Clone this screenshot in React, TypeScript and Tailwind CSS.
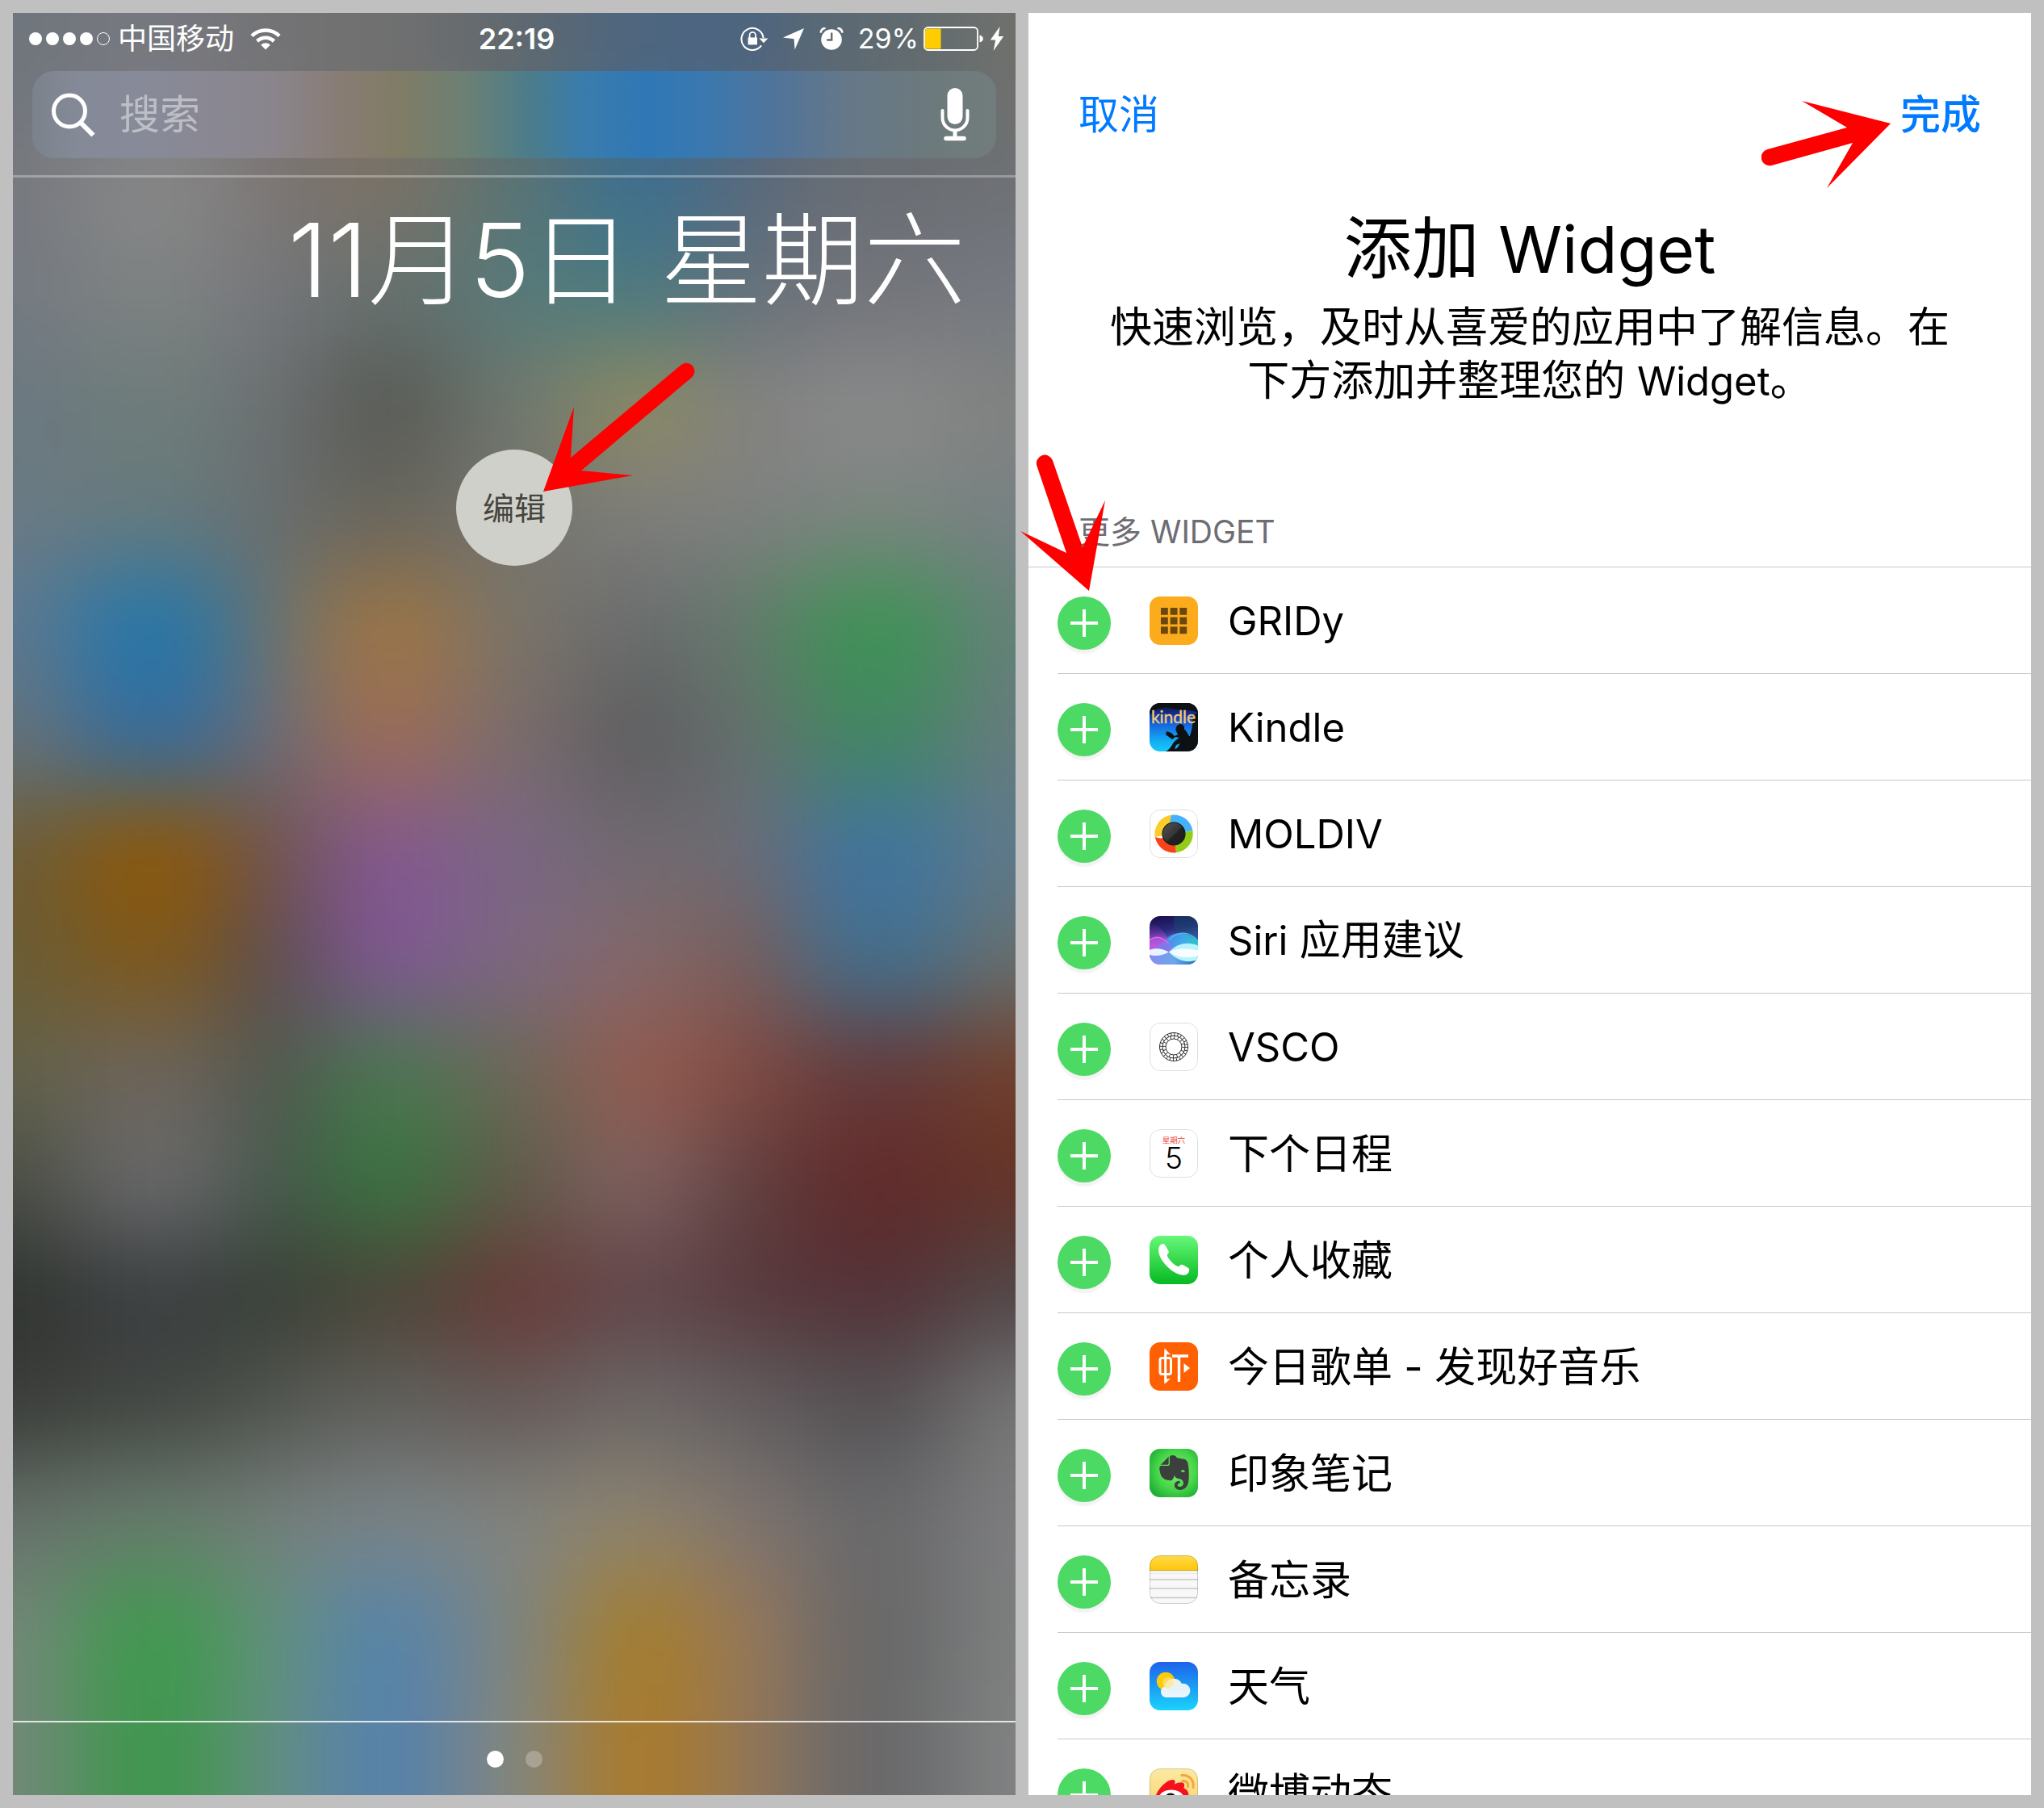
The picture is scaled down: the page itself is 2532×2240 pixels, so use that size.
import type { ReactNode } from "react";
import { FaEvernote } from "react-icons/fa";

// ─── Wallpaper ─────────────────────────────────────────────────────────────────

const COLS = [-160, 78, 266, 382, 548, 696, 848, 974, 1166, 1402];
const ROW_H = 138;

const WALL = [
  ["#6f767c", "#777880", "#737375", "#707070", "#60686e", "#4d6680", "#4c6480", "#5e6a70", "#70716c"],
  ["#76787e", "#888888", "#7c7472", "#7d7264", "#5a7472", "#386f94", "#58687c", "#6a6e74", "#6e7074"],
  ["#757a82", "#7e8282", "#76767c", "#66716f", "#557a7a", "#4a7a80", "#66707a", "#72747a", "#767a82"],
  ["#6a7880", "#6e7c7a", "#6c7072", "#575953", "#707870", "#8f8b5e", "#828280", "#8a8a8a", "#80827f"],
  ["#6b7a84", "#677a7c", "#686c6e", "#68665e", "#74746e", "#7e7e7c", "#7f8080", "#7c8480", "#788084"],
  ["#5c7890", "#2177ac", "#6c726e", "#a07642", "#7a7468", "#6a6c6e", "#637a6c", "#3a9452", "#66807a"],
  ["#66727a", "#366c9e", "#6e6c74", "#9c6c56", "#7a6c6c", "#5c5c5e", "#66706e", "#438662", "#687a7e"],
  ["#6b5c38", "#905806", "#6d5350", "#845890", "#7a6684", "#706a70", "#6c6c76", "#3e74a2", "#607a8a"],
  ["#6a5c34", "#7d581c", "#5a4c50", "#805694", "#7c6880", "#84686a", "#785c58", "#42708e", "#68706e"],
  ["#62624a", "#6c645c", "#4f554d", "#4a7850", "#6c6858", "#945a4e", "#824a42", "#643a3a", "#723f2a"],
  ["#4a4e46", "#6a6a6c", "#46564c", "#387440", "#5e5a4a", "#806262", "#5e4040", "#622a2a", "#643428"],
  ["#303430", "#3a3e40", "#363f36", "#4c4438", "#6a3836", "#60464a", "#58383c", "#523238", "#4e4648"],
  ["#3a3c38", "#434642", "#52564f", "#60605c", "#645a58", "#6c6868", "#625e60", "#545254", "#787878"],
  ["#66706a", "#6a7c70", "#767e7c", "#7c8486", "#82847f", "#8e8470", "#7e7470", "#6a6a6c", "#7e7e80"],
  ["#74887a", "#3e9a4d", "#66907c", "#5484ac", "#7e8480", "#a67e28", "#98785c", "#686868", "#7e8080"],
  ["#74887a", "#3e964d", "#688e82", "#5481ae", "#84867e", "#ac7a26", "#94785a", "#68686a", "#828484"],
];

function Wallpaper() {
  return (
    <svg className="absolute inset-0 h-full w-full" viewBox="0 0 1242 2208" preserveAspectRatio="none" aria-hidden="true">
      <defs>
        <filter id="wall-blur" filterUnits="userSpaceOnUse" x="-200" y="-200" width="1642" height="2608" colorInterpolationFilters="sRGB">
          <feGaussianBlur stdDeviation="60 58" />
        </filter>
      </defs>
      <g filter="url(#wall-blur)">
        {WALL.map((row, r) =>
          row.map((fill, c) => {
            const top = r === 0 ? -160 : r * ROW_H;
            const bottom = r === WALL.length - 1 ? 2368 : (r + 1) * ROW_H;
            return <rect key={`${r}-${c}`} x={COLS[c]} y={top} width={COLS[c + 1] - COLS[c] + 1} height={bottom - top + 1} fill={fill} />;
          }),
        )}
      </g>
    </svg>
  );
}

// ─── Status bar glyphs ─────────────────────────────────────────────────────────

function WifiGlyph() {
  return (
    <svg className="h-[28px] w-[38px]" viewBox="0 0 38 28" fill="none" stroke="#fff" strokeWidth="4.6">
      <path d="M2 10.5a24 24 0 0 1 34 0" />
      <path d="M8.6 17a14.8 14.8 0 0 1 20.8 0" />
      <path d="M19 27.5l-5.8-5.8a8.2 8.2 0 0 1 11.6 0z" fill="#fff" stroke="none" />
    </svg>
  );
}

function RotationLockGlyph() {
  return (
    <svg className="h-[30px] w-[36px]" viewBox="0 0 36 30" fill="none" stroke="#fff">
      <path d="M26.1 23.4A13.6 13.6 0 1 1 28.6 14" strokeWidth="2" />
      <path d="M23.4 14.4h11l-5.5 5.8z" fill="#fff" stroke="none" />
      <rect x="9.6" y="13.4" width="11.4" height="9" fill="#fff" stroke="none" />
      <path d="M11.6 14v-3.4a3.7 3.7 0 0 1 7.4 0V14" strokeWidth="1.8" />
    </svg>
  );
}

function LocationGlyph() {
  return (
    <svg className="h-[28px] w-[28px]" viewBox="0 0 28 28">
      <path d="M27 1L15.5 27.5 14.6 14.2 1 12.6z" fill="#fff" />
    </svg>
  );
}

function AlarmGlyph() {
  return (
    <svg className="h-[28px] w-[30px]" viewBox="0 0 30 28">
      <circle cx="15" cy="15" r="12.8" fill="#fff" />
      <path d="M1.6 6.6C2 3.4 4.2 1 7.6 .7M28.4 6.6C28 3.4 25.8 1 22.4 .7" stroke="#fff" strokeWidth="2.6" fill="none" />
      <path d="M15.2 6.5v9h-6" stroke="#666b6e" strokeWidth="2.4" fill="none" />
    </svg>
  );
}

function BatteryGlyph() {
  return (
    <svg className="h-[30px] w-[74px]" viewBox="0 0 74 30">
      <rect x="1" y="1" width="66" height="28" rx="4.5" fill="none" stroke="#fff" strokeWidth="1.8" />
      <path d="M5 2.5h16.5v25H5a3 3 0 0 1-3-3v-19a3 3 0 0 1 3-3z" fill="#ffcc00" />
      <path d="M69.5 10.5c3 .6 4.3 2.3 4.3 4.5s-1.3 3.9-4.3 4.5z" fill="#fff" />
    </svg>
  );
}

function BoltGlyph() {
  return (
    <svg className="h-[30px] w-[18px]" viewBox="0 0 18 30">
      <path d="M12.5 0L.8 16.5h6.4L4.6 30 17.2 12h-6.4z" fill="#fff" />
    </svg>
  );
}

function StatusBar() {
  return (
    <div className="grid h-[72px] grid-cols-[1fr_auto_1fr] items-center pb-2 pl-5 pr-[14px] text-[36px] leading-none">
      <div className="flex items-center">
        <div className="flex gap-[5px]">
          {[0, 1, 2, 3].map((i) => (
            <span key={i} className="size-4 rounded-full bg-white" />
          ))}
          <span className="size-4 rounded-full border border-white" />
        </div>
        <span className="ml-[10px]">中国移动</span>
        <span className="ml-5">
          <WifiGlyph />
        </span>
      </div>
      <span className="font-semibold">22:19</span>
      <div className="flex items-center justify-end">
        <RotationLockGlyph />
        <span className="ml-4">
          <LocationGlyph />
        </span>
        <span className="ml-[18px]">
          <AlarmGlyph />
        </span>
        <span className="ml-[18px] text-[34px]">29%</span>
        <span className="ml-[6px]">
          <BatteryGlyph />
        </span>
        <span className="ml-2">
          <BoltGlyph />
        </span>
      </div>
    </div>
  );
}

// ─── Annotation arrows ─────────────────────────────────────────────────────────

function EditArrow() {
  return (
    <svg className="pointer-events-none absolute bottom-[92px] left-[108px] z-10 h-[160px] w-[188px]" viewBox="0 0 188 160" fill="#ff0000">
      <path d="M0 160L38 55 34 118 170.5 3.2A10.2 10.2 0 0 1 184 18.6L47 134 111 140z" />
    </svg>
  );
}

function DoneArrow() {
  return (
    <svg className="pointer-events-none absolute right-full top-[19px] mr-3 h-[108px] w-[160px]" viewBox="0 0 160 108" fill="#ff0000">
      <path d="M160 28L50 0 106 33 7.5 60A10.2 10.2 0 0 0 12.5 80L113 52 81 108z" />
    </svg>
  );
}

function AddArrow() {
  return (
    <svg className="pointer-events-none absolute bottom-[-30px] left-[-10px] z-10 h-[169px] w-[105px]" viewBox="0 0 105 169" fill="#ff0000">
      <path d="M85 169L0 95 57 122 20.5 14.5A10.3 10.3 0 0 1 40 7.5L77 115 105 57z" />
    </svg>
  );
}

// ─── App icons ─────────────────────────────────────────────────────────────────

function Tile({ children, border = false }: { children: ReactNode; border?: boolean }) {
  return (
    <svg className="size-[60px] shrink-0 rounded-[13px]" viewBox="0 0 60 60" aria-hidden="true">
      {children}
      {border && <rect x="0.5" y="0.5" width="59" height="59" rx="12.5" fill="none" stroke="#dedede" />}
    </svg>
  );
}

const gridy = (
  <Tile>
    <rect width="60" height="60" fill="#fcab1c" />
    {[14, 25.7, 37.4].map((y) => [14, 25.7, 37.4].map((x) => <rect key={`${x}-${y}`} x={x} y={y} width="8.8" height="8.8" fill="#6b470c" />))}
  </Tile>
);

const kindle = (
  <Tile>
    <defs>
      <linearGradient id="kindle-sky" x1="0" y1="0" x2="0" y2="1">
        <stop offset="0" stopColor="#10131c" />
        <stop offset="0.2" stopColor="#122a8c" />
        <stop offset="0.45" stopColor="#1668e0" />
        <stop offset="0.8" stopColor="#12b0f4" />
        <stop offset="1" stopColor="#18c8fa" />
      </linearGradient>
    </defs>
    <rect width="60" height="60" fill="url(#kindle-sky)" />
    <path d="M0 0h60v60H20c4-2 7-6 9-10 3-4 6-6 8-7l-5-1c-1.5 1-3 2.5-4 3l-8-6 1-4 6 2 4 4 4-2c0-1-2.5-3-2.5-6 0-3 2-6.500 5.500-7 4 0 5.500 3 5 6.500 2.500 1.500 4.500 6 6.500 9 3-7 4-14 4-22 1-4 3-6 6-8L50 9 34 8 20 5 8 8 0 14z" fill="#0e1114" />
    <path d="M33 52l5-2-4 6-3 1z" fill="#18a8f0" />
    <text x="29.5" y="25" textAnchor="middle" fontSize="21" fontFamily="Lato, sans-serif" stroke="#f5c878" strokeWidth="0.4" fill="#f5c878">
      kindle
    </text>
  </Tile>
);

const moldiv = (
  <Tile border>
    <defs>
      <linearGradient id="moldiv-lens" x1="0" y1="0" x2="1" y2="1">
        <stop offset="0" stopColor="#555" />
        <stop offset="0.5" stopColor="#363636" />
        <stop offset="0.55" stopColor="#222" />
        <stop offset="1" stopColor="#1c1c1c" />
      </linearGradient>
    </defs>
    <rect width="60" height="60" fill="#fff" />
    <path d="M30 30L6.8 34A23.5 23.5 0 0 1 28 6.6z" fill="#fccb2c" />
    <path d="M30 30L28 6.6C24 12 25 20 30 30l23.4-4A23.5 23.5 0 0 0 28 6.6z" fill="#43b2fb" />
    <path d="M30 30l23.4-4A23.5 23.5 0 0 1 33 53.3z" fill="#93cc16" />
    <path d="M30 30l3 23.3A23.5 23.5 0 0 1 6.8 34c6 2.5 14 2 23.2-4z" fill="#f9421c" />
    <circle cx="30" cy="30" r="14" fill="url(#moldiv-lens)" stroke="#1a1a1a" strokeWidth="1.2" />
  </Tile>
);

const siri = (
  <Tile>
    <defs>
      <linearGradient id="siri-bg" x1="0" y1="0" x2="0.2" y2="1">
        <stop offset="0" stopColor="#160c48" />
        <stop offset="0.35" stopColor="#2c2a7c" />
        <stop offset="0.65" stopColor="#5a78d8" />
        <stop offset="1" stopColor="#6a7ce0" />
      </linearGradient>
      <linearGradient id="siri-right" x1="0" y1="0" x2="1" y2="0">
        <stop offset="0.3" stopColor="#4d8df0" />
        <stop offset="0.7" stopColor="#3fb4ec" />
        <stop offset="1" stopColor="#1fd4c0" />
      </linearGradient>
      <linearGradient id="siri-left" x1="0" y1="0" x2="0" y2="1">
        <stop offset="0" stopColor="#9a3cc8" stopOpacity="0" />
        <stop offset="1" stopColor="#d850e0" />
      </linearGradient>
      <linearGradient id="siri-floor" x1="0" y1="0" x2="1" y2="0">
        <stop offset="0" stopColor="#8a8cf0" />
        <stop offset="0.5" stopColor="#6aa8ec" />
        <stop offset="1" stopColor="#1c6cb4" />
      </linearGradient>
    </defs>
    <rect width="60" height="60" fill="url(#siri-bg)" />
    <path d="M0 8c10 2 18 10 24 22L0 44z" fill="url(#siri-left)" />
    <path d="M30 0h30v30c-8-8-18-12-30-9z" fill="#134a6c" opacity="0.5" />
    <path d="M0 44c12-2 20-22 36-23 10-.6 18 5 24 10v21c-10 4-22 6-36 4C14 54 8 48 0 46z" fill="url(#siri-right)" opacity="0.85" />
    <path d="M0 30c8-6 16-4 24 4 8 9 14 16 22 22l-26 4H0z" fill="#c060e8" opacity="0.45" />
    <path d="M0 47c10 3 18 0 24-2 10 10 24 14 36 8v7H0z" fill="url(#siri-floor)" />
    <path d="M0 30c8-7 16-4 24 4" fill="none" stroke="#f060e0" strokeWidth="1.4" />
    <path d="M24 30c8-10 24-14 36 1" fill="none" stroke="#58b4f8" strokeWidth="1.4" />
    <path d="M0 42c7-3 16-2 24 2.5-8 4.5-17 5.5-24 3.5z" fill="#e8f4ff" />
    <path d="M24 44.500c9-10 22-14 36-8V54c-14 5-26 1-36-9.500z" fill="#b8f4ff" />
    <path d="M24 44.500c10-5 22-5 36-2v7c-14 3-26 2-36-5z" fill="#fff" opacity="0.9" />
  </Tile>
);

const vsco = (
  <Tile border>
    <rect width="60" height="60" fill="#fff" />
    <g fill="none" stroke="#2c2c2c">
      <circle cx="30" cy="30" r="17.5" />
      <circle cx="30" cy="30" r="14" />
      <circle cx="30" cy="30" r="10" />
      <circle cx="30" cy="30" r="15.8" strokeWidth="3.5" strokeDasharray="0.9 3.236" />
      <circle cx="30" cy="30" r="12" strokeWidth="4" strokeDasharray="0.9 3.812" />
    </g>
  </Tile>
);

const calendar = (
  <Tile border>
    <rect width="60" height="60" fill="#fff" />
    <text x="30" y="17" textAnchor="middle" fontSize="9.5" fontFamily="'Noto Sans CJK SC', sans-serif" fill="#f0433a">
      星期六
    </text>
    <text x="30" y="49" textAnchor="middle" fontSize="37" fontWeight="300" fontFamily="Inter, sans-serif" fill="#000">
      5
    </text>
  </Tile>
);

const phone = (
  <Tile>
    <defs>
      <linearGradient id="phone-bg" x1="0" y1="0" x2="0" y2="1">
        <stop offset="0" stopColor="#67f879" />
        <stop offset="1" stopColor="#06b922" />
      </linearGradient>
    </defs>
    <rect width="60" height="60" fill="url(#phone-bg)" />
    <path d="M12.5 12.5c1.5-1.8 3.6-2.6 5-2.4 1.4.3 2.6 3 4 5.4 1.3 2.3 2.7 3.7 2.3 5.3-.3 1.3-2 1.9-2 3.2 0 2.2 3.5 6.4 6 8.9 2.5 2.4 6 5 8 5 1.5 0 1.8-1.8 3.4-2.2 1.8-.4 3.6 1 5.6 2.3 2 1.2 4.4 2.3 4.5 3.7.1 1.6-.7 4.2-2.7 5.9-2 1.5-6 1.7-10.3.2-5-1.8-11.5-6.3-15.8-11.1C15.8 31.8 12 25.5 11.3 20c-.4-3 0-5.9 1.2-7.5z" fill="#fff" />
  </Tile>
);

const xiami = (
  <Tile>
    <rect width="60" height="60" fill="#fe6002" />
    <g fill="none" stroke="#fff" strokeWidth="3">
      <rect x="13" y="19.5" width="13.5" height="20" rx="2.5" />
      <path d="M19.7 10v40" />
      <path d="M28 17h20M36.5 17v32" strokeWidth="3.4" />
    </g>
    <path d="M18.2 7l8 8.5-6.5-1zM18.2 52l8-7-6.5.8z" fill="#fff" />
    <path d="M42.5 26v12l7.5-6z" fill="#fff" />
  </Tile>
);

const evernote = (
  <Tile>
    <defs>
      <radialGradient id="ever-bg" cx="0.55" cy="0.45" r="0.65">
        <stop offset="0" stopColor="#7cf070" />
        <stop offset="0.6" stopColor="#48d64a" />
        <stop offset="1" stopColor="#1fae36" />
      </radialGradient>
    </defs>
    <rect width="60" height="60" fill="url(#ever-bg)" />
    <FaEvernote x="6" y="5" size={49} color="#3c403c" />
  </Tile>
);

const notes = (
  <Tile>
    <defs>
      <linearGradient id="notes-top" x1="0" y1="0" x2="0" y2="1">
        <stop offset="0" stopColor="#ffdc4e" />
        <stop offset="1" stopColor="#fdc507" />
      </linearGradient>
    </defs>
    <rect width="60" height="60" fill="#f8f8f8" />
    <rect width="60" height="19" fill="url(#notes-top)" />
    <path d="M0 18.7h60" stroke="#c9a23c" />
    <path d="M0 22.5h60" stroke="#dcdcdc" strokeDasharray="1 1" />
    <path d="M0 30h60M0 41h60M0 52.5h60" stroke="#c8c8c8" strokeWidth="1.3" />
    <rect x="0.5" y="0.5" width="59" height="59" rx="12.5" fill="none" stroke="#000" strokeOpacity="0.18" />
  </Tile>
);

const weather = (
  <Tile>
    <defs>
      <linearGradient id="weather-bg" x1="0" y1="0" x2="0" y2="1">
        <stop offset="0" stopColor="#1d62ea" />
        <stop offset="1" stopColor="#1bd3fd" />
      </linearGradient>
      <linearGradient id="weather-cloud" x1="0" y1="0" x2="0" y2="1">
        <stop offset="0" stopColor="#fdf6d4" />
        <stop offset="0.5" stopColor="#eef7fd" />
        <stop offset="1" stopColor="#f6fbff" />
      </linearGradient>
    </defs>
    <rect width="60" height="60" fill="url(#weather-bg)" />
    <circle cx="20" cy="24" r="11.2" fill="#fdcb08" />
    <path d="M20.5 44a7 7 0 0 1-2-13.5A11.5 11.5 0 0 1 40 27a8.6 8.6 0 1 1 2 17z" fill="url(#weather-cloud)" fillOpacity="0.95" />
    <circle cx="23" cy="26" r="7" fill="#fbe48a" opacity="0.6" />
  </Tile>
);

const weibo = (
  <Tile>
    <defs>
      <linearGradient id="weibo-bg" x1="0" y1="0" x2="0" y2="1">
        <stop offset="0" stopColor="#fbeaa4" />
        <stop offset="1" stopColor="#f8cf62" />
      </linearGradient>
    </defs>
    <rect width="60" height="60" fill="url(#weibo-bg)" />
    <path d="M8 33c3-8 13-19 21-19 3 0 3 3 2 5.5 5-2.5 11-3.5 12 0 .5 2-.5 4-.5 5 3 1 6 4 6 9 0 9-10 16-22 16S6 43 8 33z" fill="#f5121c" />
    <ellipse cx="27" cy="37" rx="15.5" ry="10.5" fill="#fff" />
    <circle cx="26" cy="38" r="7.5" fill="#111" />
    <g fill="none" stroke="#f9a33c" strokeWidth="3" strokeLinecap="round">
      <path d="M40 8.5c9-1 15.5 6 14 15" />
      <path d="M41 15.5c4.5-.5 7.5 3 6.5 7" />
    </g>
    <rect x="0.5" y="0.5" width="59" height="59" rx="12.5" fill="none" stroke="#000" strokeOpacity="0.15" />
  </Tile>
);

const WIDGETS: { name: string; latin?: string; icon: ReactNode }[] = [
  { latin: "GRIDy", name: "", icon: gridy },
  { latin: "Kindle", name: "", icon: kindle },
  { latin: "MOLDIV", name: "", icon: moldiv },
  { latin: "Siri", name: " 应用建议", icon: siri },
  { latin: "VSCO", name: "", icon: vsco },
  { name: "下个日程", icon: calendar },
  { name: "个人收藏", icon: phone },
  { name: "今日歌单 - 发现好音乐", icon: xiami },
  { name: "印象笔记", icon: evernote },
  { name: "备忘录", icon: notes },
  { name: "天气", icon: weather },
  { name: "微博动态", icon: weibo },
];

// ─── Panels ────────────────────────────────────────────────────────────────────

function TodayPanel() {
  return (
    <section className="relative flex flex-col overflow-hidden bg-[#6f7274] text-white">
      <Wallpaper />

      <header className="relative border-b-[3px] border-white/30 pb-[21px]">
        <StatusBar />
        <form
          role="search"
          className="mx-6 flex h-[108px] items-center rounded-[27px] bg-[linear-gradient(90deg,#7c828c_0%,#858a98_5%,#888a98_13%,#8a858c_25%,#887c74_32%,#807c66_38%,#6c8074_45%,#4a7c8c_52%,#3a7cac_57%,#2f78b6_64%,#3b78ae_70%,#50749a_77%,#667888_85%,#6d7a7c_94%,#727c7c_100%)] pl-6 pr-[33px]"
        >
          <svg className="h-[56px] w-[56px] shrink-0" viewBox="0 0 56 56" fill="none" stroke="#fff" aria-hidden="true">
            <circle cx="22" cy="23.5" r="19.5" strokeWidth="5" />
            <path d="M36 38l15.5 15.5" strokeWidth="6" />
          </svg>
          <input
            type="search"
            aria-label="搜索"
            placeholder="搜索"
            className="ml-7 min-w-0 flex-1 bg-transparent text-[50px] leading-[72px] outline-none placeholder:text-white/45"
          />
          <button type="button" aria-label="听写">
            <svg className="h-[66px] w-9" viewBox="0 0 36 66" fill="none" stroke="#fff">
              <rect x="8.5" y="0" width="19" height="45" rx="9.5" fill="#fff" stroke="none" />
              <path d="M2.5 28v9a15.5 15.5 0 0 0 31 0v-9" strokeWidth="4" strokeLinecap="round" />
              <path d="M18 52v9" strokeWidth="5" />
              <path d="M7 62.5h22" strokeWidth="5.5" strokeLinecap="round" />
            </svg>
          </button>
        </form>
      </header>

      <h1 className="relative pr-[62px] pt-[22px] text-right text-[126px] font-light leading-[160px]">11月5日 星期六</h1>

      <div className="relative mx-auto mt-[155px] size-36">
        <button type="button" className="size-36 rounded-full bg-[#d0d0cb] text-[39px] leading-none text-[#45463f]">
          编辑
        </button>
        <EditArrow />
      </div>

      <footer className="relative mt-auto flex h-[92px] items-center justify-center gap-[27px] border-t-2 border-white/80">
        <span className="size-[21px] rounded-full bg-white" />
        <span className="size-[21px] rounded-full bg-white/25" />
      </footer>
    </section>
  );
}

function WidgetRow({ name, latin = "", icon }: { name: string; latin?: string; icon: ReactNode }) {
  return (
    <li className="ml-9 flex h-[132px] items-center border-b border-[#c8c7cc]">
      <button type="button" aria-label={`添加 ${latin}${name}`} className="mt-1.5 size-[66px] shrink-0 rounded-full bg-[#4cd964] shadow-[0_5px_2px_rgba(0,0,0,0.05)]">
        <svg className="size-full" viewBox="0 0 66 66" stroke="#fff" strokeWidth="4">
          <path d="M16 33h34M33 16v34" />
        </svg>
      </button>
      <div className="ml-12 mr-[37px]">{icon}</div>
      <span className="whitespace-pre pt-0.5 text-[51px] leading-[72px]">
        {latin && <span className="text-[49px]">{latin}</span>}
        {name}
      </span>
    </li>
  );
}

function WidgetPanel() {
  return (
    <section className="relative overflow-y-clip bg-white text-black">
      <nav className="flex items-center justify-between px-[62px] pt-[90px] text-[50px] leading-[72px] text-[#007aff]">
        <button type="button">取消</button>
        <div className="relative">
          <button type="button" className="font-medium">
            完成
          </button>
          <DoneArrow />
        </div>
      </nav>

      <h2 className="mt-[82px] text-center text-[84px] leading-[96px]">
        添加 <span className="text-[80px]">Widget</span>
      </h2>
      <p className="mt-4 px-[88px] text-center text-[52px] leading-[66px]">
        快速浏览，及时从喜爱的应用中了解信息。在下方添加并整理您的 <span className="text-[49px]">Widget</span>。
      </p>

      <div className="relative mt-[110px] border-b border-[#c8c7cc]">
        <h3 className="px-[62px] text-[39px] leading-[86px] text-[#6d6d72]">更多 WIDGET</h3>
        <AddArrow />
      </div>
      <ul>
        {WIDGETS.map((w) => (
          <WidgetRow key={`${w.latin}${w.name}`} name={w.name} latin={w.latin} icon={w.icon} />
        ))}
      </ul>
    </section>
  );
}

export default function App() {
  return (
    <main
      lang="zh-CN"
      className="grid h-screen grid-cols-2 grid-rows-[minmax(0,1fr)] gap-4 overflow-hidden bg-[#c0c0c0] p-4 font-['Inter','Noto_Sans_CJK_SC',sans-serif]"
    >
      <TodayPanel />
      <WidgetPanel />
    </main>
  );
}
